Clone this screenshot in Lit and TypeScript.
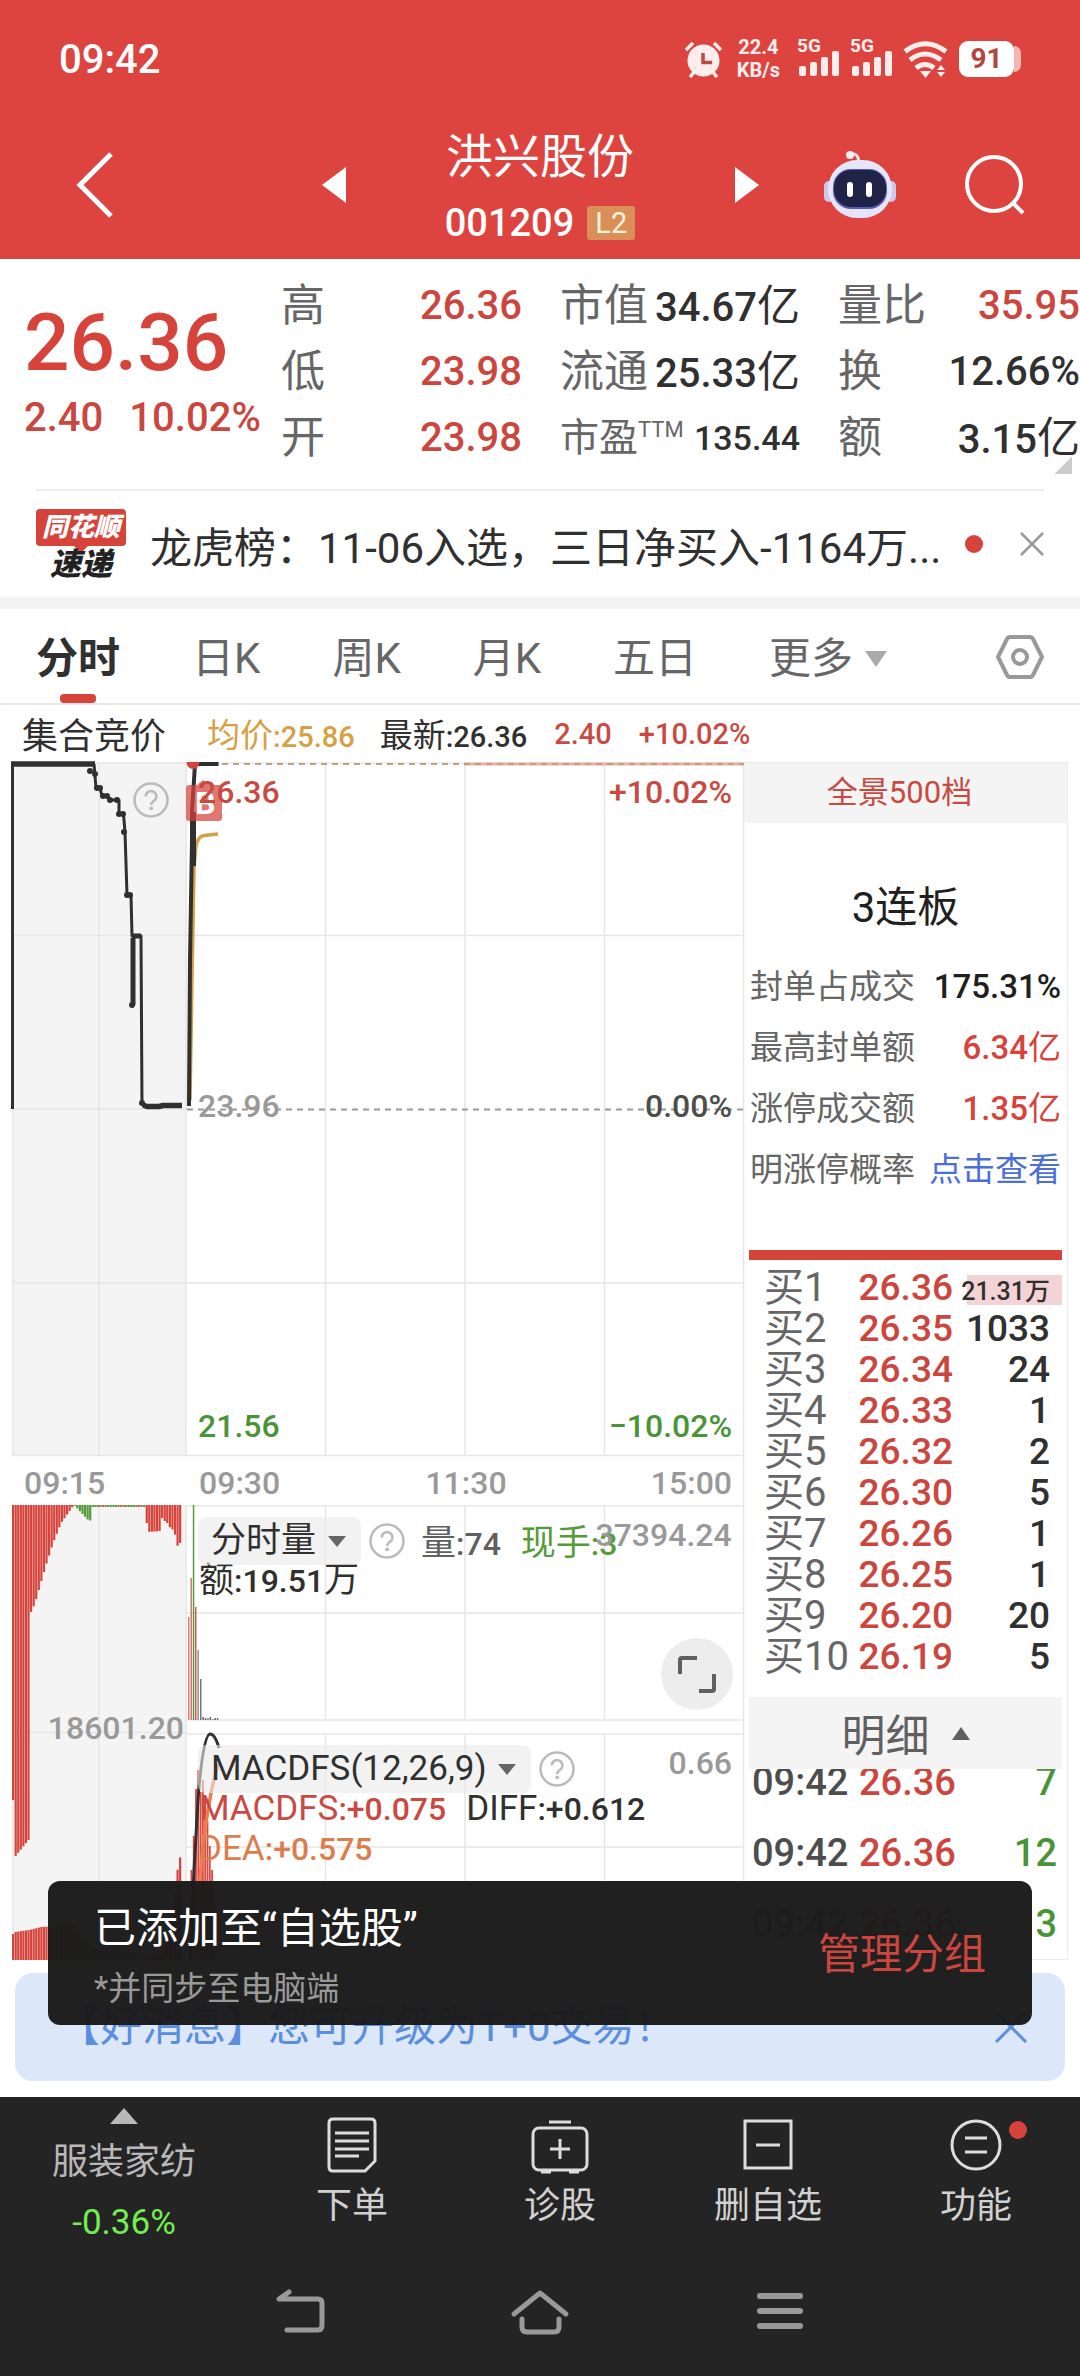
import { LitElement, html, css, svg } from "lit";
import { customElement } from "lit/decorators.js";
import { classMap } from "lit/directives/class-map.js";

type Point = [number, number];

/** Linear interpolation over a sorted list of key points. */
function interpolate(keys: Point[], x: number): number {
  for (let i = 1; i < keys.length; i++) {
    const [x0, y0] = keys[i - 1];
    const [x1, y1] = keys[i];
    if (x <= x1) return y0 + ((y1 - y0) * (x - x0)) / (x1 - x0 || 1);
  }
  return keys[keys.length - 1][1];
}

const COLORS = {
  red: "#d6433b",
  green: "#559b3a",
  ink: "#303030",
  grid: "#e6e6e6",
  gold: "#d6a044",
};

const AUCTION_MATCHED: Point[] = [
  [12, 295], [14.4, 295], [14.5, 351], [29, 333], [29.5, 108], [34, 98], [44, 63], [52, 38],
  [60, 18], [72, 1], [74, 1], [89, 17], [90, 2], [145, 2], [146, 27], [159, 26], [160, 20],
  [162, 7], [164, 18], [168, 18], [170, 29], [172, 22], [174, 30], [177, 43], [181, 33],
];
const AUCTION_UNMATCHED: Point[] = [
  [12, 26], [14, 28], [28, 30], [40, 33], [72, 35], [90, 14], [160, 4], [170, 24], [176, 88], [181, 112],
];
const AUCTION_STEPS = Array.from({ length: 66 }, (_, i) => 12 + i * 2.57);

const VOLUME_BARS: [number, number, string][] = [
  [188, 1617, "#dd7a74"], [190.5, 1578, "#c9786c"], [192.8, 1505, "#559b3a"], [195, 1607, "#c9605a"],
  [197.4, 1650, "#9a8b8b"], [200, 1679, "#777"], [202.4, 1717, "#666"], [204.8, 1718, "#666"],
  [207.2, 1718, "#888"], [209.6, 1717, "#666"], [212, 1719, "#888"], [214.4, 1718, "#666"], [216.8, 1718, "#666"],
];
const MACD_BARS: Point[] = [
  [190.5, 1870], [192.8, 1836], [195.1, 1789], [197.4, 1770], [199.7, 1792], [202, 1780],
  [204.3, 1799], [206.6, 1821], [208.9, 1846], [211.2, 1870], [213.5, 1905],
];
const AUCTION_DOTS: Point[] = [
  [90, 771], [95, 774], [97, 788], [100, 788], [103, 796], [107, 796], [110, 800], [117, 800],
  [119, 814], [123, 814], [124, 832], [127, 895], [130, 895], [132, 1005], [142, 1103],
];

const ORDERS: [string, string, string][] = [
  ["买1", "26.36", "21.31万"], ["买2", "26.35", "1033"], ["买3", "26.34", "24"], ["买4", "26.33", "1"],
  ["买5", "26.32", "2"], ["买6", "26.30", "5"], ["买7", "26.26", "1"], ["买8", "26.25", "1"],
  ["买9", "26.20", "20"], ["买10", "26.19", "5"],
];
const TRADES: [string, string, string][] = [
  ["09:42", "26.36", "7"], ["09:42", "26.36", "12"], ["09:42", "26.36", "3"],
];

@customElement("market-charts")
class MarketCharts extends LitElement {
  static styles = css`
    :host { display: block; position: relative; min-width: 0; font-size: 32px; font-weight: 500; color: #999; }
    .plot { position: absolute; inset: 0; width: 100%; height: 100%; overflow: visible; }
    .layers { position: relative; display: grid; grid-template-rows: 694px 49px 215px 240px; }
    .price { display: flex; flex-direction: column; justify-content: space-between; padding: 10px 12px 10px 198px; line-height: 40px; }
    .row { display: flex; justify-content: space-between; }
    .mid { padding-bottom: 6px; }
    .up { color: #c94a42; }
    .down { color: #4a9438; }
    .flat { color: #4d4d4d; }
    .axis { display: grid; grid-template-columns: 187fr 186fr 186fr 185fr; align-items: center; padding-top: 4px; }
    .axis span:nth-child(1) { padding-left: 24px; }
    .axis span:nth-child(2) { padding-left: 12px; }
    .axis span:nth-child(3) { text-align: center; }
    .axis span:nth-child(4) { text-align: right; padding-right: 12px; }
    .pane { padding: 12px 12px 0 198px; }
    .macd { padding-top: 25px; }
    .bar { display: flex; align-items: center; height: 48px; }
    .chip { position: relative; display: flex; align-items: center; background: rgba(233, 233, 233, 0.6); border-radius: 8px; height: 48px; }
    select { appearance: none; border: 0; margin: 0; background: none; font: inherit; font-weight: 400; font-size: 35px; line-height: 48px; color: #303030; padding: 0 44px 0 13px; outline: 0; }
    .chip svg { position: absolute; right: 14px; width: 20px; height: 13px; pointer-events: none; }
    .help { border: 0; background: none; padding: 0; margin-left: 8px; width: 36px; height: 36px; flex: none; }
    .help svg, .spot svg { display: block; width: 36px; height: 36px; }
    .cj { font-size: 35px; font-weight: 400; }
    .stat { margin-left: 16px; padding-bottom: 4px; color: #606060; white-space: nowrap; }
    .hand { margin-left: 20px; color: #559b3a; }
    .scale { margin-left: auto; align-self: flex-start; line-height: 36px; }
    .clash { margin-left: -22px; }
    .line { display: flex; gap: 20px; line-height: 40px; margin-top: -4px; padding-left: 1px; color: #303030; white-space: nowrap; }
    .line.tight { margin-top: 0; }
    .orange { color: #dd7d4e; }
    .spot { position: absolute; left: 133px; top: 20px; background: none; border: 0; padding: 0; }
    .left-scale { position: absolute; left: 0; top: 946px; width: 25%; box-sizing: border-box; padding-right: 2px; text-align: right; line-height: 40px; }
    .expand { position: absolute; right: 11px; top: 876px; width: 72px; height: 72px; border: 0; border-radius: 50%; background: #ededed; padding: 0; display: grid; place-items: center; }
    .expand svg { width: 40px; height: 40px; }
  `;

  private arrow() {
    return html`<svg viewBox="0 0 20 13" aria-hidden="true"><path d="M1 1h18l-9 11z" fill="#666" /></svg>`;
  }

  private help() {
    return svg`<circle cx="18" cy="18" r="16.5" fill="none" stroke="#bbb" stroke-width="2.5"/>
      <path d="M12.8 14.4a5.3 5.3 0 1 1 8.6 4.1c-2.2 1.6-3.2 2.3-3.2 4.6" fill="none" stroke="#bbb" stroke-width="2.5"/>
      <circle cx="18.2" cy="26.3" r="1.9" fill="#bbb"/>`;
  }

  private auctionColor(x: number) {
    return x > 73 && x < 91 ? COLORS.green : x >= 91 && x < 145 ? (Math.round(x) % 3 ? COLORS.green : "#b56a55") : COLORS.red;
  }

  private plot() {
    const grid = COLORS.grid;
    return html`<svg class="plot" viewBox="0 762 744 1198" preserveAspectRatio="none" aria-hidden="true">
      <rect x="12" y="762" width="175" height="694" fill="#f4f4f4" />
      <rect x="12" y="1505" width="175" height="455" fill="#f4f4f4" />
      <g stroke=${grid} stroke-width="1.5">
        <path d="M12 763H744M12 935.5H744M12 1109H187M12 1283H744M12 1455.5H744" />
        <path d="M187 1506H744M187 1613H744M187 1720H744M12 1732.5H187M187 1734H744M187 1847H744" />
        <path d="M13 762V1456M99 762V1456M186 762V1456M325.500 762V1456M465 762V1456M604.500 762V1456M743.500 762V1960" />
        <path d="M13 1505V1960M99 1505V1960M186 1505V1960M325.500 1505V1720M465 1505V1720M604.500 1505V1720" />
        <path d="M325.500 1734V1960M465 1734V1960M604.500 1734V1960" />
      </g>
      <path d="M464 764H744" stroke="#eab0ab" stroke-width="3" />
      <path d="M222 764H744" stroke="#bda27a" stroke-width="2" stroke-dasharray="6 5" />
      <path d="M187 1109.500H744" stroke="#999" stroke-width="2" stroke-dasharray="6 5" />

      <g fill="none" stroke=${COLORS.ink} stroke-linejoin="round">
        <path d="M12.500 1109V764" stroke-width="3" />
        <path d="M11 764H95" stroke-width="5.500" />
        <path d="M94 764L96 788H100L102 796H108L110 800H119V814H123.500L125 832L127 895H131L132 936H141L142 1104L145 1106" stroke-width="3" />
        <path d="M133 938V1005M132 936H141" stroke-width="5" />
        <path d="M143 1105L147 1106.500H159L163 1105.500H182" stroke-width="5.500" />
      </g>
      ${AUCTION_DOTS.map(([x, y]) => svg`<circle cx=${x} cy=${y} r="3" fill=${COLORS.ink}/>`)}
      <path d="M190 1100L192 980L194 868L196 846Q198 836 204 835.500L218 834" fill="none" stroke=${COLORS.gold} stroke-width="3.500" />
      <g fill="none" stroke=${COLORS.ink}>
        <path d="M189 1106L190 960L192 840V812L195 764" stroke-width="4" />
        <path d="M193 812V866" stroke-width="6" />
        <path d="M196 764H218.500" stroke-width="4" />
      </g>
      <path d="M186.500 762h13a6.500 7 0 0 1-13 0" fill=${COLORS.red} />
      <path d="M189 785h8l6-5 6 5h10q3 0 3 3v30q0 3-3 3h-30q-3 0-3-3v-30q0-3 3-3z" fill="rgba(214,67,59,.72)" />
      <text x="195" y="814" font-size="32" font-weight="700" fill="#fff">B</text>

      ${AUCTION_STEPS.map(
        (x) => svg`<rect x=${x} y="1505" width="2.200" height=${interpolate(AUCTION_MATCHED, x)} fill=${this.auctionColor(x)}/>
          <rect x=${x} y=${1960 - interpolate(AUCTION_UNMATCHED, x)} width="2.200" height=${interpolate(AUCTION_UNMATCHED, x)} fill=${this.auctionColor(x)}/>`,
      )}
      ${VOLUME_BARS.map(([x, y, c]) => svg`<rect x=${x} y=${y} width="1.500" height=${1720 - y} fill=${c}/>`)}
      ${MACD_BARS.map(([x, y]) => svg`<rect x=${x} y=${y} width="1.800" height=${1960 - y} fill="#dc4740"/>`)}
      <path d="M190 1960L194 1870L198 1800Q203 1734 210 1734Q215 1734 219 1748" fill="none" stroke="#303030" stroke-width="3" />
      <path d="M196 1960L200 1880Q205 1810 218 1764" fill="none" stroke="#ee7c4c" stroke-width="3.500" />
    </svg>`;
  }

  render() {
    return html`
      ${this.plot()}
      <div class="layers">
        <div class="price">
          <div class="row up"><span>26.36</span><span>+10.02%</span></div>
          <div class="row mid"><span>23.96</span><span class="flat">0.00%</span></div>
          <div class="row down"><span>21.56</span><span>−10.02%</span></div>
        </div>
        <div class="axis"><span>09:15</span><span>09:30</span><span>11:30</span><span>15:00</span></div>
        <div class="pane">
          <div class="bar">
            <div class="chip">
              <select aria-label="副图指标一"><option>分时量</option></select>${this.arrow()}
            </div>
            <button class="help" aria-label="分时量说明"><svg viewBox="0 0 36 36">${this.help()}</svg></button>
            <span class="stat"><span class="cj">量</span>:74</span>
            <span class="stat hand"><span class="cj">现手</span>:3</span>
            <span class="scale clash">37394.24</span>
          </div>
          <div class="line"><span><span class="cj">额</span>:19.51<span class="cj">万</span></span></div>
        </div>
        <div class="pane macd">
          <div class="bar">
            <div class="chip">
              <select aria-label="副图指标二"><option>MACDFS(12,26,9)</option></select>${this.arrow()}
            </div>
            <button class="help" aria-label="MACDFS说明"><svg viewBox="0 0 36 36">${this.help()}</svg></button>
            <span class="scale">0.66</span>
          </div>
          <div class="line"><span class="up"><span class="cj">MACDFS</span>:+0.075</span><span><span class="cj">DIFF</span>:+0.612</span></div>
          <div class="line tight"><span class="orange"><span class="cj">DEA</span>:+0.575</span></div>
        </div>
      </div>
      <button class="spot" aria-label="集合竞价说明"><svg viewBox="0 0 36 36">${this.help()}</svg></button>
      <div class="left-scale">18601.20</div>
      <button class="expand" aria-label="全屏">
        <svg viewBox="0 0 40 40" fill="none" stroke="#606060" stroke-width="4"><path d="M3 20V6q0-2 2-2h15M37 20v15q0 2-2 2H22" /></svg>
      </button>
    `;
  }
}

@customElement("order-panel")
class OrderPanel extends LitElement {
  static styles = css`
    :host { display: flex; flex-direction: column; box-sizing: border-box; border: 1px solid #ebebeb; border-left: 0; color: #666; overflow: hidden; }
    button { font: inherit; border: 0; margin: 0; padding: 0; }
    .depth { background: #f4f4f4; color: #c94a42; font-size: 31px; line-height: 60px; height: 60px; text-align: center; padding-right: 12px; }
    .streak { margin: 0; font-size: 42px; font-weight: 400; line-height: 60px; color: #202020; text-align: center; padding: 55px 0 18px; }
    dl { margin: 0; padding: 0 6px; }
    .kv { display: flex; justify-content: space-between; font-size: 33px; line-height: 61px; white-space: nowrap; }
    dt, dd { margin: 0; }
    .num { font-weight: 500; color: #202020; }
    .num.up { color: #d6433b; }
    .cj { font-weight: 400; }
    a { color: #4a6fd8; text-decoration: none; }
    .ratio { height: 10px; background: #d6433b; margin: 50px 5px 7px; flex: none; }
    table { border-collapse: collapse; font-weight: 500; table-layout: fixed; }
    th, td { padding: 0; text-align: left; white-space: nowrap; }
    .book { width: calc(100% - 10px); margin: 0 5px; }
    .book th { box-sizing: border-box; font-size: 40px; font-weight: 400; padding-left: 15px; width: 35%; line-height: 41px; }
    .book td { line-height: 41px; height: 41px; }
    .book .price { width: 32%; }
    .price { color: #cb463e; font-size: 37px; }
    .qty { color: #303030; font-size: 37px; text-align: right; padding-right: 12px; }
    .big { font-size: 25px; }
    .big .cell { display: block; line-height: 34px; height: 30px; padding-right: 12px; margin: 4px -12px 0 8px; background: #f4d3d5; direction: rtl; }
    .detail { display: flex; align-items: center; justify-content: center; gap: 22px; margin: 20px 5px 0; height: 72px; flex: none; background: #f4f4f4; color: #606060; font-size: 44px; }
    .detail svg { width: 18px; height: 13px; }
    .ticks { flex: 1 1 0; overflow: hidden; }
    .tape { width: calc(100% - 14px); margin: -22px 6px 0 8px; }
    .tape td { height: 71px; line-height: 71px; font-size: 38px; }
    .time { color: #4d4d4d; width: 107px; }
    .tape .sell { color: #4a9438; text-align: right; padding-right: 4px; }
  `;

  render() {
    return html`
      <button class="depth">全景500档</button>
      <h2 class="streak">3连板</h2>
      <dl>
        <div class="kv"><dt>封单占成交</dt><dd class="num">175.31%</dd></div>
        <div class="kv"><dt>最高封单额</dt><dd class="num up">6.34<span class="cj">亿</span></dd></div>
        <div class="kv"><dt>涨停成交额</dt><dd class="num up">1.35<span class="cj">亿</span></dd></div>
        <div class="kv"><dt>明涨停概率</dt><dd><a href="#probability">点击查看</a></dd></div>
      </dl>
      <div class="ratio"></div>
      <table class="book">
        ${ORDERS.map(
          ([level, price, qty], i) => html`<tr>
            <th scope="row">${level}</th>
            <td class="price">${price}</td>
            <td class=${classMap({ qty: true, big: i === 0 })}>${i === 0 ? html`<span class="cell">${qty}</span>` : qty}</td>
          </tr>`,
        )}
      </table>
      <button class="detail">明细<svg viewBox="0 0 18 13" aria-hidden="true"><path d="M9 0l9 13H0z" fill="#606060" /></svg></button>
      <div class="ticks">
        <table class="tape">
          ${TRADES.map(
            ([time, price, qty]) => html`<tr><td class="time">${time}</td><td class="price">${price}</td><td class="sell">${qty}</td></tr>`,
          )}
        </table>
      </div>
    `;
  }
}

@customElement("app-root")
class AppRoot extends LitElement {
  static styles = css`
    :host { display: block; position: relative; background: #fff; color: #303030; font-family: Roboto, "Noto Sans CJK SC", sans-serif; font-size: 40px; overflow-x: hidden; }
    button { font: inherit; color: inherit; background: none; border: 0; padding: 0; margin: 0; }
    svg { display: block; }
    .top { background: #dd4440; color: #fff; }
    .status { display: flex; align-items: center; height: 118px; padding: 0 59px; font-weight: 500; }
    .status time { margin-right: auto; }
    .icons { display: flex; align-items: center; color: #fdeeed; }
    .rate { display: flex; flex-direction: column; text-align: center; font-size: 20px; line-height: 23px; font-weight: 700; margin: 0 17px 0 15px; }
    .signal { position: relative; width: 42px; margin-right: 11px; }
    .signal b { display: block; font-size: 19px; line-height: 16px; height: 12px; margin-top: -4px; }
    .battery { display: flex; align-items: center; margin-left: 10px; }
    .battery b { background: #fff; color: #b4443e; border-radius: 9px; width: 55px; text-align: center; font-size: 28px; line-height: 36px; font-weight: 700; }
    .battery i { width: 7px; height: 26px; background: #f3b6b4; border-radius: 0 8px 8px 0; }
    .nav { display: grid; grid-template-columns: 1fr auto 1fr; align-items: center; height: 134px; padding-bottom: 7px; }
    .nav > button { padding-left: 76px; }
    .stock { display: flex; align-items: center; justify-content: space-between; width: 437px; }
    .name { display: flex; flex-direction: column; align-items: center; }
    h1 { margin: 0; font-size: 47px; font-weight: 400; line-height: 66px; }
    .code { display: flex; align-items: center; gap: 13px; font-size: 38px; font-weight: 500; line-height: 46px; padding-top: 10px; }
    .l2 { background: #d88f58; color: #fff2dd; font-size: 29px; font-weight: 400; line-height: 34px; width: 48px; text-align: center; border-radius: 3px; }
    .tools { display: flex; justify-content: flex-end; align-items: center; gap: 69px; padding-right: 55px; }
    .quote { position: relative; display: grid; grid-template-columns: 257fr 241fr 278fr 280fr; padding: 14px 0 18px 24px; }
    .last { display: block; font-size: 80px; font-weight: 500; line-height: 80px; padding-top: 30px; color: #d6433b; }
    .diff { display: flex; gap: 26px; font-weight: 500; line-height: 40px; padding-top: 15px; color: #cb463e; white-space: nowrap; }
    .col { margin: 0; padding-left: 38px; }
    .col.first { padding-left: 0; }
    .item { display: flex; justify-content: space-between; height: 66px; line-height: 66px; white-space: nowrap; }
    .item dt { color: #666; font-size: 44px; }
    .item dd { margin: 0; font-weight: 500; color: #303030; }
    .item .red { color: #cb463e; }
    .item .cj { font-weight: 400; font-size: 43px; }
    .item .small { font-size: 39px; }
    .item sup { font-size: 22px; line-height: 0; }
    .item .less { font-size: 34px; }
    .corner { position: absolute; right: 8px; bottom: 15px; width: 18px; height: 17px; background: linear-gradient(to bottom right, transparent 50%, #ccc 50%); }
    .news { display: flex; align-items: center; margin: 0 36px; border-top: 2px solid #ececec; height: 106px; }
    .logo { flex: none; width: 90px; margin-right: 24px; text-align: center; font-weight: 900; font-style: italic; }
    .logo b { display: block; background: #d6433b; color: #fff; border-radius: 4px; font-size: 26px; line-height: 37px; font-weight: 900; }
    .logo svg { margin: 0 auto; }
    .logo em { display: block; font-size: 31px; line-height: 30px; color: #222; margin-top: -3px; }
    .news a { flex: 1; min-width: 0; overflow: hidden; white-space: nowrap; font-size: 42px; color: #303030; text-decoration: none; }
    .unread { width: 18px; height: 18px; border-radius: 50%; background: #d6433b; margin: 0 37px 0 0; }
    .band { height: 12px; background: #f4f4f4; }
    .tabs { display: flex; align-items: stretch; height: 96px; border-bottom: 2px solid #e6e6e6; box-sizing: border-box; padding: 0 36px; color: #666; }
    .tabs button { box-sizing: border-box; font-size: 42px; line-height: 88px; padding-top: 6px; height: 94px; margin-right: 72px; display: flex; align-items: center; gap: 11px; white-space: nowrap; }
    .tabs .on { position: relative; font-weight: 700; color: #303030; }
    .tabs .on::after { content: ""; position: absolute; left: 24px; bottom: 0; width: 36px; height: 9px; border-radius: 4px; background: #d6433b; }
    .tabs .gear { margin: 0 0 0 auto; padding-top: 2px; }
    .legend { display: flex; align-items: center; height: 57px; padding: 0 22px 2px; box-sizing: border-box; font-size: 29px; font-weight: 500; white-space: nowrap; }
    .legend .phase { font-size: 36px; font-weight: 400; margin-right: 41px; }
    .legend .cj { font-size: 33px; font-weight: 400; }
    .gold { color: #d6a044; margin-right: 25px; }
    .legend .red { color: #c94a42; margin-left: 27px; padding-top: 2px; }
    .board { display: grid; grid-template-columns: 744fr 324fr; padding-right: 12px; height: 1198px; }
    .promo { display: flex; align-items: center; justify-content: space-between; margin: 13px 15px 16px; height: 108px; border-radius: 18px; background: #dce7f9; color: #5b8edc; font-size: 42px; line-height: 60px; padding: 0 38px 0 43px; }
    .toast { position: absolute; left: 48px; right: 48px; bottom: 351px; height: 144px; box-sizing: border-box; display: flex; align-items: center; justify-content: space-between; border-radius: 12px; background: rgba(27, 27, 27, 0.975); padding: 8px 46px 0; color: #fff; }
    .toast p { margin: 0; font-size: 42px; line-height: 60px; }
    .toast .sub { font-size: 33px; color: #999; }
    .toast p:first-child { padding-top: 4px; }
    .toast a { color: #cb463e; font-size: 42px; line-height: 60px; text-decoration: none; padding-bottom: 4px; }
    .bottom { background: #242424; height: 279px; color: #d0d0d0; font-size: 36px; }
    .menu { display: grid; grid-template-columns: 248fr repeat(4, 208fr); height: 149px; }
    .menu button { position: relative; display: flex; flex-direction: column; align-items: center; padding-top: 18px; }
    .menu button span { line-height: 50px; padding-top: 6px; }
    .menu .sector { color: #b8b8b8; padding-top: 11px; }
    .menu .sector span { line-height: 54px; padding-top: 11px; }
    .menu .sector strong { font-weight: 400; font-size: 35px; line-height: 50px; color: #73ee50; padding-top: 9px; }
    .dot { position: absolute; left: 137px; top: 24px; width: 18px; height: 18px; border-radius: 50%; background: #d6433b; }
    .keys { display: grid; grid-template-columns: repeat(3, 1fr); padding: 2px 180px 0; height: 128px; align-items: center; justify-items: center; }
  `;

  private signal() {
    return html`<div class="signal"><b>5G</b>
      <svg width="42" height="26" viewBox="0 0 42 26" fill="#fdeeed" aria-hidden="true">
        <rect x="2" y="16" width="7" height="10" rx="2" /><rect x="13" y="12" width="7" height="14" rx="2" />
        <rect x="24" y="7" width="7" height="19" rx="2" /><rect x="35" y="1" width="7" height="25" rx="2" />
      </svg></div>`;
  }

  private statusBar() {
    return html`<div class="status">
      <time>09:42</time>
      <div class="icons">
        <svg width="37" height="37" viewBox="0 0 37 37" aria-label="闹钟">
          <circle cx="18.500" cy="19.500" r="16" fill="#fdeeed" />
          <path d="M1 9L8 2M36 9L29 2M5 36l5-6M32 36l-5-6" stroke="#fdeeed" stroke-width="3.500" fill="none" />
          <path d="M18 12v9.500h9" stroke="#c24843" stroke-width="3.500" fill="none" />
        </svg>
        <div class="rate"><span>22.4</span><span>KB/s</span></div>
        ${this.signal()}${this.signal()}
        <svg width="46" height="37" viewBox="0 0 46 37" fill="none" stroke="#fdeeed" stroke-width="5" aria-label="无线网络">
          <path d="M2 10.500Q22 -5 43 10.500M7 19Q22 7 38 19M13 27q9-7 18 0" />
          <path d="M17 30h11l-5.500 7zM34 29l4-5 4 5zM34 31l4 5 4-5z" fill="#fdeeed" stroke="none" />
        </svg>
        <div class="battery"><b>91</b><i></i></div>
      </div>
    </div>`;
  }

  private robot() {
    return html`<svg width="72" height="70" viewBox="0 0 72 70" aria-hidden="true">
      <path d="M26 4q8-2 9 8" fill="none" stroke="#f0e4ee" stroke-width="3" /><circle cx="26" cy="5" r="4" fill="#f6ecf4" />
      <rect x="0" y="31" width="10" height="21" rx="5" fill="#cfc8ee" /><rect x="62" y="31" width="10" height="21" rx="5" fill="#cfc8ee" />
      <rect x="4" y="10" width="64" height="58" rx="29" fill="#e6e6fa" />
      <rect x="9" y="19" width="54" height="40" rx="18" fill="#5a55b8" />
      <rect x="10" y="20" width="52" height="37" rx="17" fill="#1f2446" />
      <rect x="23" y="32" width="6" height="15" rx="3" fill="#fff" /><rect x="42" y="32" width="6" height="15" rx="3" fill="#fff" />
    </svg>`;
  }

  private header() {
    return html`<header class="top">
      ${this.statusBar()}
      <div class="nav">
        <button aria-label="返回"><svg width="38" height="66" viewBox="0 0 38 66"><path d="M35 2L4 33L35 64" fill="none" stroke="#fff" stroke-width="5" /></svg></button>
        <div class="stock">
          <button aria-label="上一只"><svg width="24" height="36" viewBox="0 0 24 36"><path d="M24 0v36L0 18z" fill="#fff" /></svg></button>
          <div class="name"><h1>洪兴股份</h1><div class="code">001209<span class="l2">L2</span></div></div>
          <button aria-label="下一只"><svg width="24" height="36" viewBox="0 0 24 36"><path d="M0 0v36l24-18z" fill="#fff" /></svg></button>
        </div>
        <div class="tools">
          <button aria-label="智能助手">${this.robot()}</button>
          <button aria-label="搜索"><svg width="60" height="60" viewBox="0 0 60 60" fill="none" stroke="#fff" stroke-width="4"><circle cx="29" cy="29" r="27" /><path d="M48 48l10 10" /></svg></button>
        </div>
      </div>
    </header>`;
  }

  private quote() {
    return html`<section class="quote">
      <div><strong class="last">26.36</strong><div class="diff"><span>2.40</span><span>10.02%</span></div></div>
      <dl class="col first">
        <div class="item"><dt>高</dt><dd class="red">26.36</dd></div>
        <div class="item"><dt>低</dt><dd class="red">23.98</dd></div>
        <div class="item"><dt>开</dt><dd class="red">23.98</dd></div>
      </dl>
      <dl class="col">
        <div class="item"><dt>市值</dt><dd>34.67<span class="cj">亿</span></dd></div>
        <div class="item"><dt>流通</dt><dd>25.33<span class="cj">亿</span></dd></div>
        <div class="item"><dt class="small">市盈<sup>TTM</sup></dt><dd class="less">135.44</dd></div>
      </dl>
      <dl class="col">
        <div class="item"><dt>量比</dt><dd class="red">35.95</dd></div>
        <div class="item"><dt>换</dt><dd>12.66%</dd></div>
        <div class="item"><dt>额</dt><dd>3.15<span class="cj">亿</span></dd></div>
      </dl>
      <span class="corner"></span>
    </section>`;
  }

  private news() {
    return html`<section class="news">
      <div class="logo"><b>同花顺</b><svg width="14" height="7" viewBox="0 0 14 7"><path d="M0 0h14L7 7z" fill="#d6433b" /></svg><em>速递</em></div>
      <a href="#news">龙虎榜：11-06入选，三日净买入-1164万...</a>
      <span class="unread"></span>
      <button aria-label="关闭资讯"><svg width="24" height="24" viewBox="0 0 24 24"><path d="M1 1l22 22M23 1L1 23" stroke="#999" stroke-width="2.500" /></svg></button>
    </section>`;
  }

  private footer() {
    const line = { fill: "none", stroke: "#dcdcdc" };
    return html`<footer class="bottom">
      <nav class="menu">
        <button class="sector">
          <svg width="28" height="16" viewBox="0 0 28 16" aria-hidden="true"><path d="M14 0l14 16H0z" fill="#b8b8b8" /></svg>
          <span>服装家纺</span><strong>-0.36%</strong>
        </button>
        <button>
          <svg width="56" height="60" viewBox="0 0 56 60" fill=${line.fill} stroke=${line.stroke} stroke-width="3" aria-hidden="true">
            <path d="M9 4h38q4 0 4 4v38L41 56H9q-4 0-4-4V8q0-4 4-4zM11 18h34M11 26h34M11 34h34M11 41h24" />
          </svg><span>下单</span>
        </button>
        <button>
          <svg width="60" height="60" viewBox="0 0 60 60" fill=${line.fill} stroke=${line.stroke} stroke-width="3" aria-hidden="true">
            <rect x="3" y="13" width="54" height="42" rx="6" /><path d="M19 7h22M30 24v20M20 34h20M11 57h10M39 57h10" />
          </svg><span>诊股</span>
        </button>
        <button>
          <svg width="56" height="60" viewBox="0 0 56 60" fill=${line.fill} stroke=${line.stroke} stroke-width="3" aria-hidden="true">
            <path d="M5 6h46v47H5zM16 30h24" />
          </svg><span>删自选</span>
        </button>
        <button>
          <svg width="56" height="60" viewBox="0 0 56 60" fill=${line.fill} stroke=${line.stroke} stroke-width="3" aria-hidden="true">
            <circle cx="28" cy="30" r="24" /><path d="M17 23h22M17 37h22" />
          </svg><span>功能</span><i class="dot"></i>
        </button>
      </nav>
      <div class="keys">
        <button aria-label="返回键"><svg width="50" height="46" viewBox="0 0 50 46" fill="none" stroke="#999" stroke-width="5" stroke-linecap="round" stroke-linejoin="round"><path d="M14 3L4 10H43q4 0 4 4V36q0 5-4 5H12" /></svg></button>
        <button aria-label="主页键"><svg width="60" height="48" viewBox="0 0 60 48" fill="none" stroke="#999" stroke-width="5" stroke-linecap="round" stroke-linejoin="round"><path d="M4 26L30 5L56 26M12 31V39q0 5 5 5H44q5 0 5-5V31" /></svg></button>
        <button aria-label="多任务键"><svg width="46" height="42" viewBox="0 0 46 42" fill="#999"><rect y="2" width="46" height="6" rx="3" /><rect y="17" width="46" height="6" rx="3" /><rect y="32" width="46" height="6" rx="3" /></svg></button>
      </div>
    </footer>`;
  }

  render() {
    return html`
      ${this.header()} ${this.quote()} ${this.news()}
      <div class="band"></div>
      <nav class="tabs">
        <button class="on">分时</button><button>日K</button><button>周K</button><button>月K</button><button>五日</button>
        <button>更多<svg width="24" height="18" viewBox="0 0 24 18" aria-hidden="true"><path d="M1 1h22L12 17z" fill="#aaa" /></svg></button>
        <button class="gear" aria-label="设置"><svg width="48" height="46" viewBox="0 0 48 46" fill="none" stroke="#999" stroke-width="4" stroke-linejoin="round"><path d="M14 3H34Q36 3 37 5L46 23L37 41Q36 43 34 43H14Q12 43 11 41L2 23L11 5Q12 3 14 3z" /><circle cx="24" cy="23" r="7" /></svg></button>
      </nav>
      <div class="legend">
        <span class="phase">集合竞价</span>
        <span class="gold"><span class="cj">均价</span>:25.86</span>
        <span><span class="cj">最新</span>:26.36</span>
        <span class="red">2.40</span><span class="red">+10.02%</span>
      </div>
      <main class="board">
        <market-charts></market-charts>
        <order-panel></order-panel>
      </main>
      <aside class="promo">【好消息】您可升级为T+0交易！
        <button aria-label="关闭消息"><svg width="32" height="32" viewBox="0 0 32 32"><path d="M1 1l30 30M31 1L1 31" stroke="#5b8edc" stroke-width="3" /></svg></button>
      </aside>
      ${this.footer()}
      <div class="toast" role="status">
        <div><p>已添加至“自选股”</p><p class="sub">*并同步至电脑端</p></div>
        <a href="#groups">管理分组</a>
      </div>
    `;
  }
}
